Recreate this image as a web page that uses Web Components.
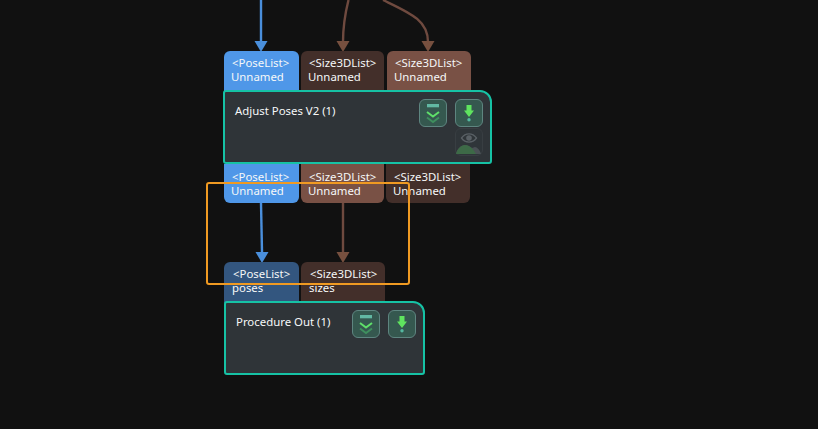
<!DOCTYPE html>
<html>
<head>
<meta charset="utf-8">
<style>
  html, body { margin: 0; height: 100%; background: #111111; overflow: hidden; }
  body { font-family: "Noto Sans", "Open Sans", sans-serif; font-size: 11.4px; color: #f6f8f8; }
</style>
</head>
<body>
<flow-canvas>
  <flow-node style="left:223px;top:51px;width:269px;--port-inset:1px;--text-inset:7px" slot="nodes">
    <flow-port slot="in" w="75" tone="blue" type="&lt;PoseList&gt;" name="Unnamed"></flow-port>
    <flow-port slot="in" w="83" tone="dark" type="&lt;Size3DList&gt;" name="Unnamed"></flow-port>
    <flow-port slot="in" w="84" tone="brown" type="&lt;Size3DList&gt;" name="Unnamed"></flow-port>
    <span slot="title">Adjust Poses V2 (1)</span>
    <node-button slot="tools" kind="step"></node-button>
    <node-button slot="tools" kind="down"></node-button>
    <node-button slot="tools" kind="view"></node-button>
    <flow-port slot="out" w="75" tone="blue" type="&lt;PoseList&gt;" name="Unnamed" side="out"></flow-port>
    <flow-port slot="out" w="83" tone="brown" type="&lt;Size3DList&gt;" name="Unnamed" side="out"></flow-port>
    <flow-port slot="out" w="84" tone="dark" type="&lt;Size3DList&gt;" name="Unnamed" side="out"></flow-port>
  </flow-node>
  <flow-node style="left:224px;top:262px;width:201px;--port-inset:0px;--text-inset:8px" slot="nodes">
    <flow-port slot="in" w="75" tone="navy" type="&lt;PoseList&gt;" name="poses"></flow-port>
    <flow-port slot="in" w="84" tone="dark" type="&lt;Size3DList&gt;" name="sizes"></flow-port>
    <span slot="title">Procedure Out (1)</span>
    <node-button slot="tools" kind="step"></node-button>
    <node-button slot="tools" kind="down"></node-button>
  </flow-node>
</flow-canvas>
<script>
class FlowCanvas extends HTMLElement {
  constructor() {
    super();
    this.attachShadow({ mode: 'open' });
    this.shadowRoot.innerHTML = `
      <style>
        :host { display: block; position: relative; width: 818px; height: 429px; overflow: hidden; }
        svg { position: absolute; left: 0; top: 0; }
        .select { position: absolute; left: 206px; top: 182px; width: 200px; height: 99px;
                  border: 2px solid #f09a22; border-radius: 3px; }
      </style>
      <svg width="818" height="429" fill="none" stroke-width="2.4">
        <g stroke="#4a8fdc" fill="#4a8fdc">
          <path d="M261 0V42" fill="none"/>
          <path d="M254.500 41h13l-6.500 11z" stroke="none"/>
          <path d="M261 203L262 252" fill="none"/>
          <path d="M255.500 252h13l-6.500 11z" stroke="none"/>
        </g>
        <g stroke="#6f4a3f" fill="#77503f">
          <path d="M348.500 0C345 14 343 26 343 42" fill="none"/>
          <path d="M336.500 41h13l-6.500 11z" stroke="none"/>
          <path d="M383 0C410 13 428 20 428 42" fill="none"/>
          <path d="M421.500 41h13l-6.500 11z" stroke="none"/>
          <path d="M343 203V252" fill="none"/>
          <path d="M336.500 252h13l-6.500 11z" stroke="none"/>
        </g>
      </svg>
      <slot name="nodes"></slot>
      <div class="select"></div>
    `;
  }
}

class FlowNode extends HTMLElement {
  constructor() {
    super();
    this.attachShadow({ mode: 'open' });
    this.shadowRoot.innerHTML = `
      <style>
        :host { display: block; position: absolute; }
        .ports { display: flex; gap: 2px; padding-left: var(--port-inset); }
        .ports.top { height: 40px; }
        .body { display: flex; justify-content: space-between; box-sizing: border-box; height: 74px;
                margin-top: -1px; position: relative; background: #2f3438; border: 2px solid #16c2a5;
                border-radius: 3px 12px 3px 3px; padding: 7px 7px 0 10px; }
        .title { line-height: 20px; padding-top: 2px; }
        .tools { display: grid; grid-template-columns: 28px 28px; grid-auto-rows: 28px;
                 column-gap: 8px; row-gap: 1px; align-content: start; justify-content: end; }
        ::slotted(node-button[kind="view"]) { grid-column: 2; }
      </style>
      <div class="ports top"><slot name="in"></slot></div>
      <div class="body">
        <div class="title"><slot name="title"></slot></div>
        <div class="tools"><slot name="tools"></slot></div>
      </div>
      <div class="ports"><slot name="out"></slot></div>
    `;
  }
}

const portTones = { blue: '#4f97e8', navy: '#33567f', dark: '#432f2a', brown: '#795145' };

class FlowPort extends HTMLElement {
  constructor() {
    super();
    this.attachShadow({ mode: 'open' });
  }
  connectedCallback() {
    const out = this.getAttribute('side') === 'out';
    this.shadowRoot.innerHTML = `
      <style>
        :host { display: block; flex: none; box-sizing: border-box; width: ${this.getAttribute('w')}px;
                height: ${out ? 39 : 41}px; background: ${portTones[this.getAttribute('tone')]};
                border-radius: ${out ? '0 0 6px 6px' : '6px 6px 0 0'}; line-height: 14px;
                padding: ${out ? '6px' : '5px'} 0 0 var(--text-inset); white-space: nowrap; }
        :host(:nth-of-type(3)) { margin-left: 1px; }
        .type { padding-left: 1px; }
      </style>
      <div class="type">${this.getAttribute('type').replace(/</g, '&lt;')}</div>
      <div>${this.getAttribute('name')}</div>
    `;
  }
}

const buttonIcons = {
  step: `<svg width="28" height="28" viewBox="0 0 28 28" fill="none">
      <rect x="8" y="5" width="12" height="3.300" fill="#62b8a3"/>
      <path d="M8 13l6 4.500 6-4.500" stroke="#5fe06a" stroke-width="2"/>
      <path d="M8 18.500l6 4.500 6-4.500" stroke="#3f8f5e" stroke-width="2"/>
    </svg>`,
  down: `<svg width="28" height="28" viewBox="0 0 28 28">
      <path d="M11.500 6h5v5.500h2.500l-5 6.500-5-6.500h2.500z" fill="#5fe45f"/>
      <circle cx="14" cy="20.700" r="1.700" fill="#54b8a0"/>
    </svg>`,
  view: `<svg width="28" height="28" viewBox="0 0 28 28" fill="none">
      <path d="M6.500 10c4-5.500 11-5.500 15 0-4 5.500-11 5.500-15 0z" stroke="#596065" stroke-width="1.300"/>
      <circle cx="14" cy="10" r="2.800" fill="#596065"/>
      <path d="M1 26c1-5 5-9 9-9 3 0 5 2 7 3l3-1c2 0 5 3 6 7z" fill="#4a5155"/>
      <path d="M1 26c1-5 5-9 9-9 5 0 9 5 11 9z" fill="#3d6a47"/>
    </svg>`
};

class NodeButton extends HTMLElement {
  constructor() {
    super();
    this.attachShadow({ mode: 'open' });
  }
  connectedCallback() {
    const kind = this.getAttribute('kind');
    const plain = kind === 'view';
    this.shadowRoot.innerHTML = `
      <style>
        :host { display: block; box-sizing: border-box; width: 28px; height: 28px; border-radius: 6px;
                background: ${plain ? '#2f3539' : '#35584f'};
                border: 1px solid ${plain ? '#383e42' : '#5e8580'}; }
        svg { display: block; margin: -1px; }
      </style>
      ${buttonIcons[kind]}
    `;
  }
}

customElements.define('flow-canvas', FlowCanvas);
customElements.define('flow-node', FlowNode);
customElements.define('flow-port', FlowPort);
customElements.define('node-button', NodeButton);
</script>
</body>
</html>
